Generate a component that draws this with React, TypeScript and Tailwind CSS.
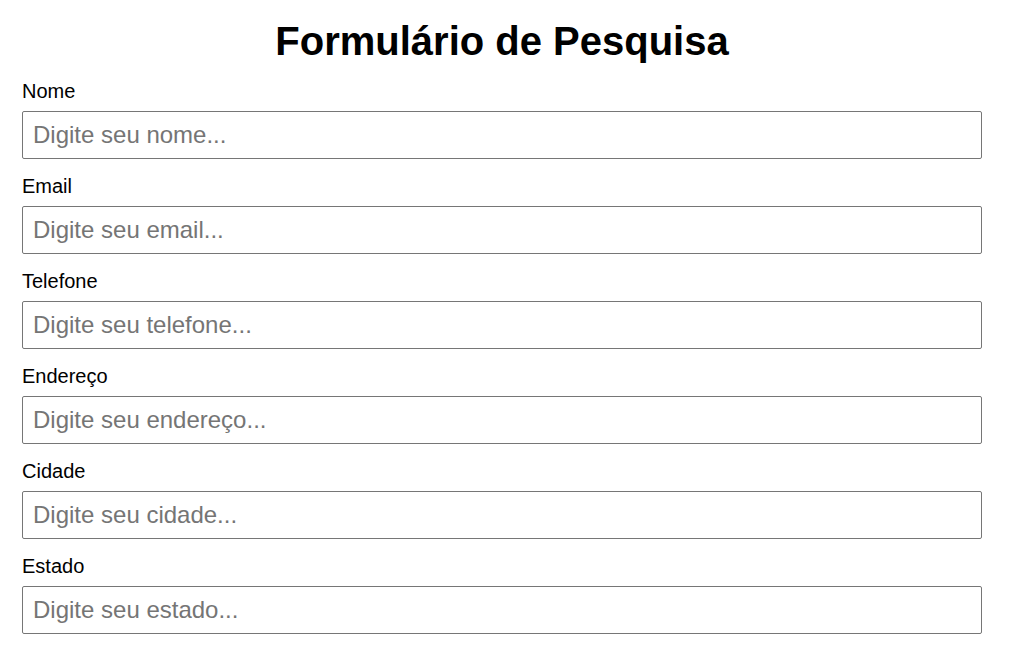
export default function App() {
  const fields = [
    { label: "Nome", placeholder: "Digite seu nome..." },
    { label: "Email", placeholder: "Digite seu email..." },
    { label: "Telefone", placeholder: "Digite seu telefone..." },
    { label: "Endereço", placeholder: "Digite seu endereço..." },
    { label: "Cidade", placeholder: "Digite seu cidade..." },
    { label: "Estado", placeholder: "Digite seu estado..." },
  ];

  return (
    <div className="min-h-screen bg-white px-[22px] pt-[18px] font-['Liberation_Sans',Arial,sans-serif] text-black">
      <div className="w-[960px]">
        <h1 className="text-center text-[40px] leading-[46px] font-bold">Formulário de Pesquisa</h1>
        <form>
          {fields.map((f) => (
            <div key={f.label} className="mt-[15px]">
              <label className="block text-[20px] leading-[24px]">{f.label}</label>
              <input
                type="text"
                placeholder={f.placeholder}
                className="mt-[8px] block h-[48px] w-full rounded-[2px] border border-[#767676] px-[10px] text-[24px] placeholder:text-[#757575] outline-none"
              />
            </div>
          ))}
        </form>
      </div>
    </div>
  );
}
